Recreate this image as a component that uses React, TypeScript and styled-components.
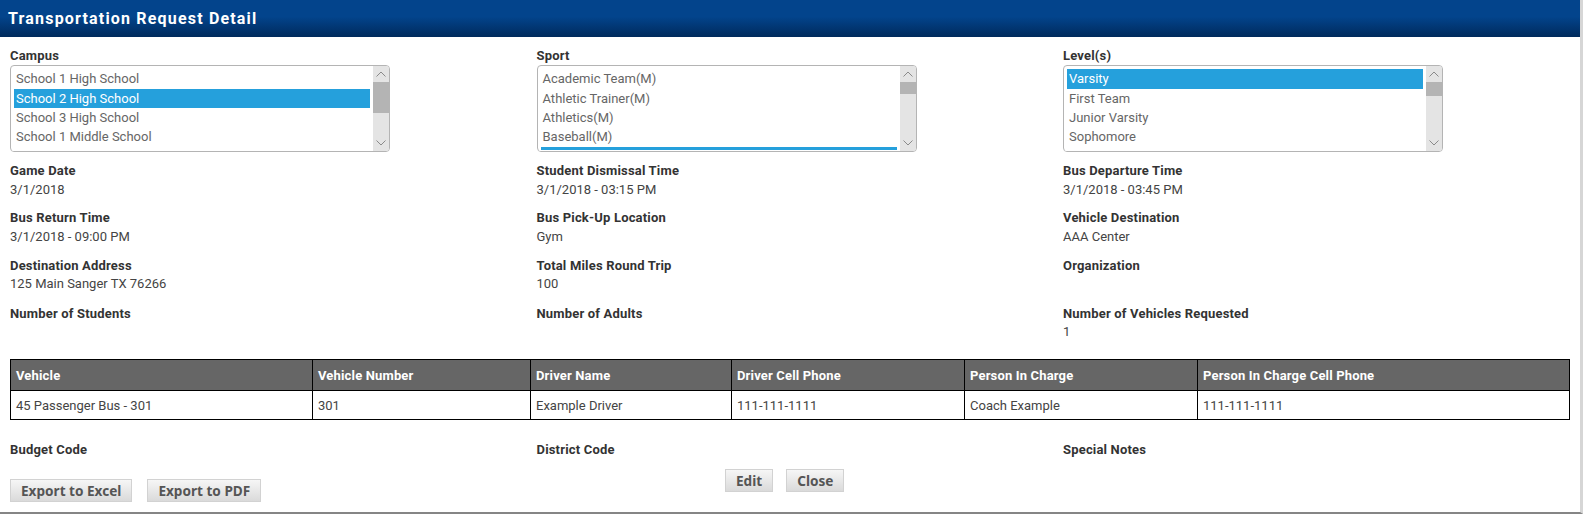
import React from 'react';
import styled, { createGlobalStyle } from 'styled-components';

const GlobalStyle = createGlobalStyle`
  html, body {
    margin: 0;
    padding: 0;
    background: #ffffff;
  }
  body {
    font-family: Roboto, "Liberation Sans", sans-serif;
    font-size: 13px;
    color: #333333;
  }
`;

const Page = styled.div`
  width: 1583px;
  height: 514px;
  overflow: hidden;
`;
const Modal = styled.div`
  width: 1580px;
  height: 512px;
  border-right: 3px solid #d6d6d6;
  border-bottom: 2px solid #858585;
  display: flex;
  flex-direction: column;
`;
const Header = styled.div`
  height: 36px;
  padding: 0 0 1px 8px;
  display: flex;
  align-items: center;
  background: linear-gradient(to bottom, #03448c 0%, #03448c 45%, #002a5c 100%);
  color: #ffffff;
  font-size: 16px;
  font-weight: 700;
  letter-spacing: 1.18px;
`;
const Body = styled.div`
  padding: 10px 10px 0 10px;
  display: flex;
  flex-direction: column;
`;
const FieldGrid = styled.div`
  display: grid;
  grid-template-columns: 526.5px 526.5px 1fr;
  grid-template-rows: 115px 47.4px 47.2px 48px 47.45px;
`;
const Label = styled.div`
  font-weight: 700;
  line-height: 17px;
  color: #333333;
  letter-spacing: 0.18px;
`;
const Value = styled.div`
  margin-top: 1.5px;
  line-height: 18px;
  color: #444444;
`;
const ListBox = styled.div`
  margin-top: 1px;
  width: 380px;
  height: 87px;
  box-sizing: border-box;
  border: 1px solid #b4b4b4;
  border-radius: 4px;
  display: flex;
  overflow: hidden;
`;
const Options = styled.div`
  flex: 1;
  padding: 3.2px 3px 0 3px;
  border-bottom: 1px solid #ffffff;
  overflow: hidden;
`;
const Option = styled.div<{ $selected?: boolean }>`
  height: 19.4px;
  box-sizing: border-box;
  padding: 1px 0 0 2px;
  line-height: 18.4px;
  white-space: nowrap;
  color: ${(p) => (p.$selected ? '#ffffff' : '#666666')};
  background: ${(p) => (p.$selected ? '#25a0dc' : 'transparent')};
`;
const ScrollBar = styled.div`
  width: 16px;
  background: #e4e4e4;
  display: flex;
  flex-direction: column;
  justify-content: space-between;
  position: relative;
`;
const Arrow = styled.div`
  height: 16px;
  display: flex;
  align-items: center;
  justify-content: center;
`;
const Thumb = styled.div<{ $height: number }>`
  position: absolute;
  left: 0;
  right: 0;
  top: 16px;
  height: ${(p) => p.$height}px;
  background: #b4b4b4;
`;
const Table = styled.table`
  margin-top: 7px;
  width: 1560px;
  table-layout: fixed;
  border-collapse: collapse;
  border: 1px solid #000000;
`;
const Th = styled.th`
  height: 31px;
  padding: 0 5px;
  box-sizing: border-box;
  background: #666666;
  border: 1px solid #000000;
  color: #ffffff;
  font-weight: 700;
  text-align: left;
  letter-spacing: 0.16px;
`;
const Td = styled.td`
  height: 29px;
  padding: 0 5px;
  box-sizing: border-box;
  border: 1px solid #000000;
  color: #444444;
`;
const Footer = styled.div`
  margin-top: 21px;
  display: grid;
  grid-template-columns: 526.5px 526.5px 1fr;
`;
const FooterLabel = styled(Label)`
  height: 19px;
`;
const ActionRow = styled.div`
  display: grid;
  grid-template-columns: 715px 1fr;
  align-items: start;
`;
const ButtonGroup = styled.div<{ $top: number; $gap: number }>`
  display: flex;
  gap: ${(p) => p.$gap}px;
  margin-top: ${(p) => p.$top}px;
`;
const Button = styled.button`
  height: 23px;
  padding: 0 10px;
  box-sizing: border-box;
  border: 1px solid #d2d2d2;
  background: linear-gradient(to bottom, #f6f6f6 0%, #dadada 100%);
  color: #555555;
  font-family: "Noto Sans", "Open Sans", sans-serif;
  font-size: 13.6px;
  font-weight: 700;
`;

const UpIcon = () => (
  <svg width="10" height="6" viewBox="0 0 10 6">
    <path d="M0.5 5.5 L5 1 L9.5 5.5" fill="none" stroke="#8a8a8a" strokeWidth="1" />
  </svg>
);
const DownIcon = () => (
  <svg width="10" height="6" viewBox="0 0 10 6">
    <path d="M0.5 0.5 L5 5 L9.5 0.5" fill="none" stroke="#8a8a8a" strokeWidth="1" />
  </svg>
);

type ListProps = {
  items: string[];
  selected: number;
  thumbHeight: number;
};

const List = ({ items, selected, thumbHeight }: ListProps) => (
  <ListBox>
    <Options>
      {items.map((item, i) => (
        <Option key={item + i} $selected={i === selected}>
          {item}
        </Option>
      ))}
    </Options>
    <ScrollBar>
      <Arrow>
        <UpIcon />
      </Arrow>
      <Thumb $height={thumbHeight} />
      <Arrow>
        <DownIcon />
      </Arrow>
    </ScrollBar>
  </ListBox>
);

const details: [string, string][] = [
  ['Game Date', '3/1/2018'],
  ['Student Dismissal Time', '3/1/2018 - 03:15 PM'],
  ['Bus Departure Time', '3/1/2018 - 03:45 PM'],
  ['Bus Return Time', '3/1/2018 - 09:00 PM'],
  ['Bus Pick-Up Location', 'Gym'],
  ['Vehicle Destination', 'AAA Center'],
  ['Destination Address', '125 Main Sanger TX 76266'],
  ['Total Miles Round Trip', '100'],
  ['Organization', ''],
  ['Number of Students', ''],
  ['Number of Adults', ''],
  ['Number of Vehicles Requested', '1'],
];

const App = () => (
  <Page>
    <GlobalStyle />
    <Modal>
      <Header>Transportation Request Detail</Header>
      <Body>
        <FieldGrid>
          <div>
            <Label>Campus</Label>
            <List
              items={['School 1 High School', 'School 2 High School', 'School 3 High School', 'School 1 Middle School']}
              selected={1}
              thumbHeight={31}
            />
          </div>
          <div>
            <Label>Sport</Label>
            <List
              items={['Academic Team(M)', 'Athletic Trainer(M)', 'Athletics(M)', 'Baseball(M)', '']}
              selected={4}
              thumbHeight={12}
            />
          </div>
          <div>
            <Label>Level(s)</Label>
            <List
              items={['Varsity', 'First Team', 'Junior Varsity', 'Sophomore']}
              selected={0}
              thumbHeight={14}
            />
          </div>
          {details.map(([label, value]) => (
            <div key={label}>
              <Label>{label}</Label>
              <Value>{value}</Value>
            </div>
          ))}
        </FieldGrid>
        <Table>
          <colgroup>
            <col style={{ width: 302 }} />
            <col style={{ width: 218 }} />
            <col style={{ width: 201 }} />
            <col style={{ width: 233 }} />
            <col style={{ width: 233 }} />
            <col />
          </colgroup>
          <thead>
            <tr>
              <Th>Vehicle</Th>
              <Th>Vehicle Number</Th>
              <Th>Driver Name</Th>
              <Th>Driver Cell Phone</Th>
              <Th>Person In Charge</Th>
              <Th>Person In Charge Cell Phone</Th>
            </tr>
          </thead>
          <tbody>
            <tr>
              <Td>45 Passenger Bus - 301</Td>
              <Td>301</Td>
              <Td>Example Driver</Td>
              <Td>111-111-1111</Td>
              <Td>Coach Example</Td>
              <Td>111-111-1111</Td>
            </tr>
          </tbody>
        </Table>
        <Footer>
          <FooterLabel>Budget Code</FooterLabel>
          <FooterLabel>District Code</FooterLabel>
          <FooterLabel>Special Notes</FooterLabel>
        </Footer>
        <ActionRow>
          <ButtonGroup $top={19} $gap={15}>
            <Button>Export to Excel</Button>
            <Button>Export to PDF</Button>
          </ButtonGroup>
          <ButtonGroup $top={9} $gap={13}>
            <Button>Edit</Button>
            <Button>Close</Button>
          </ButtonGroup>
        </ActionRow>
      </Body>
    </Modal>
  </Page>
);

export default App;
